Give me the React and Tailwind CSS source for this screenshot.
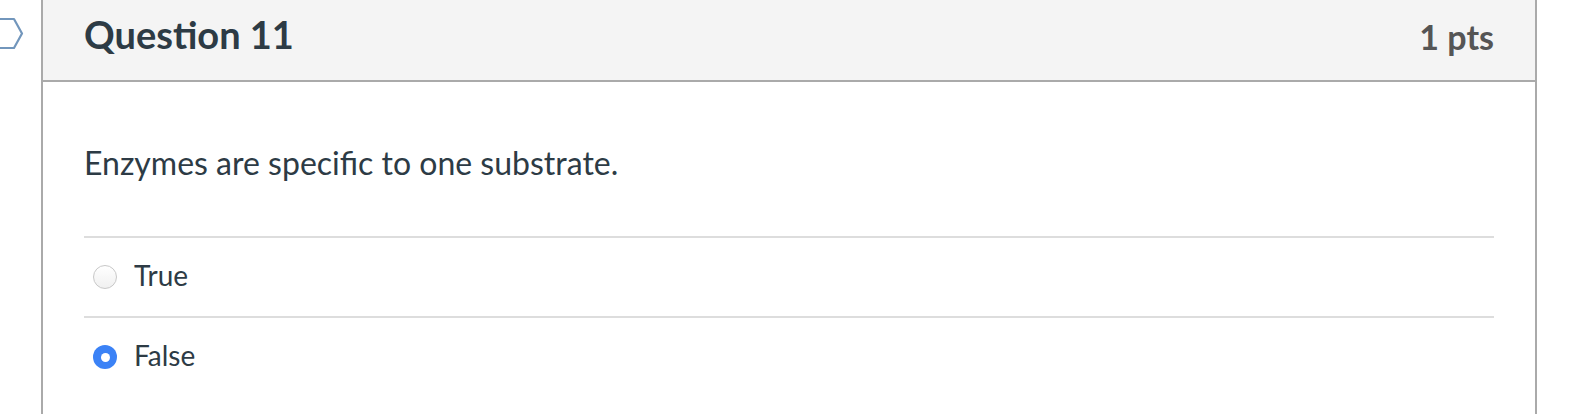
import React from 'react';

const options = [
  { label: 'True', checked: false },
  { label: 'False', checked: true },
];

const Radio = ({ checked }) =>
  checked ? (
    <span className="flex h-[24px] w-[24px] items-center justify-center rounded-full bg-[#3b82f6]">
      <span className="h-[9px] w-[9px] rounded-full bg-white" />
    </span>
  ) : (
    <span className="h-[24px] w-[24px] rounded-full border border-[#c8c8c8] bg-gradient-to-b from-white to-[#f0f0f0]" />
  );

export default function App() {
  return (
    <div className="flex h-[414px] w-[1584px] overflow-hidden bg-white font-['Lato','Liberation_Sans',sans-serif] text-[#2d3b45]">
      {/* flag marker, cut off at the page edge */}
      <div className="w-[41px] shrink-0 pt-[17px]">
        <svg width="41" height="34" viewBox="0 0 41 34">
          <polyline
            points="-10,2 14,2 22,16.5 14,31 -10,31"
            fill="none"
            stroke="#7296bc"
            strokeWidth="2.2"
            strokeLinejoin="round"
          />
        </svg>
      </div>

      <div className="w-[1496px] shrink-0 border-x-2 border-[#aaaaaa]">
        {/* header */}
        <div className="flex h-[82px] items-start justify-between border-b-2 border-[#aaaaaa] bg-[#f4f4f4] px-[41px]">
          <h2 className="mt-[12px] text-[38px] font-bold leading-[44px]">Question 11</h2>
          <div className="mt-[17px] text-[34px] font-bold leading-[40px] text-[#555555]">1 pts</div>
        </div>

        {/* body */}
        <div className="px-[41px]">
          <p className="mt-[61px] text-[32px] leading-[40px]">Enzymes are specific to one substrate.</p>
          <div className="mt-[53px]">
            {options.map((o) => (
              <div key={o.label} className="flex h-[80px] items-center gap-[17px] border-t-2 border-[#dddddd] pl-[9px]">
                <Radio checked={o.checked} />
                <span className="pb-[4px] text-[28px] leading-[28px]">{o.label}</span>
              </div>
            ))}
          </div>
        </div>
      </div>
    </div>
  );
}
